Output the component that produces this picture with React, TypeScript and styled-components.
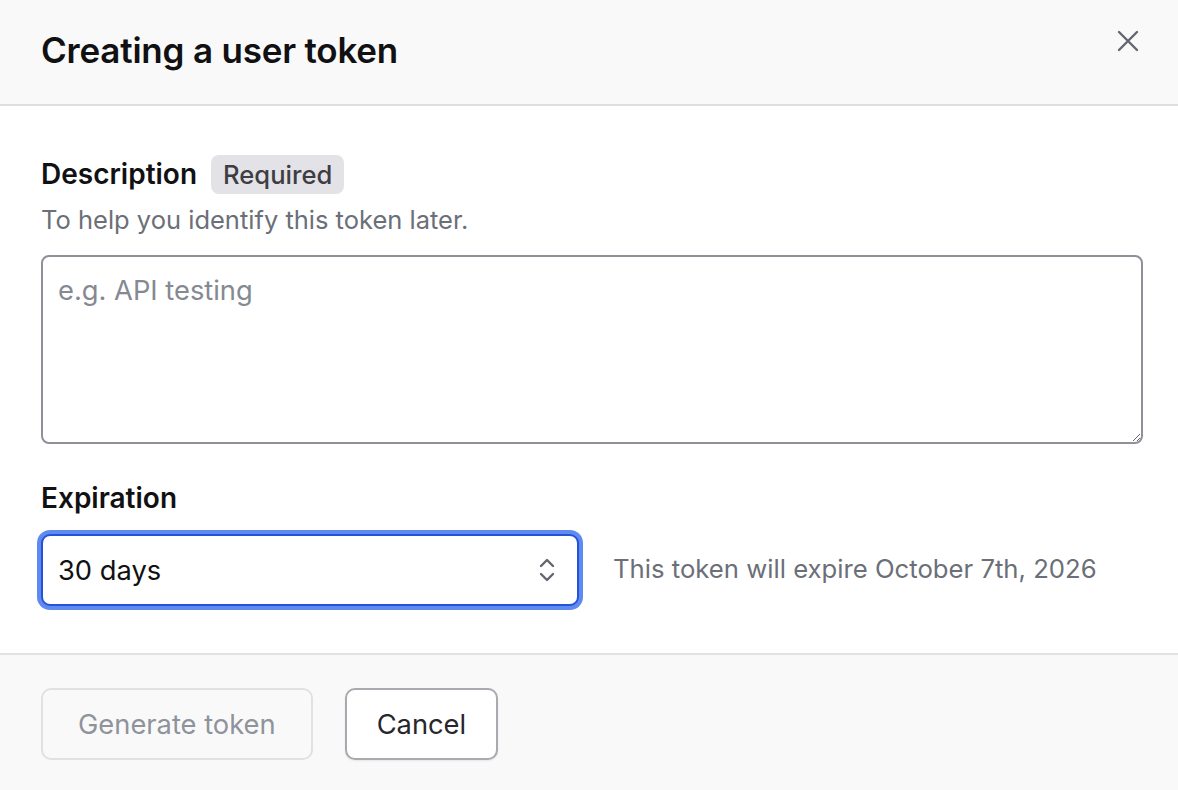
import styled, { createGlobalStyle } from "styled-components";

const GlobalStyle = createGlobalStyle`
  html, body {
    margin: 0;
    padding: 0;
    background: #ffffff;
  }
  body {
    font-family: Inter, "Noto Sans", "Liberation Sans", sans-serif;
    color: #18181b;
    -webkit-font-smoothing: antialiased;
  }
  * {
    box-sizing: border-box;
  }
`;

const Dialog = styled.div`
  width: 1178px;
  height: 790px;
  display: flex;
  flex-direction: column;
  background: #ffffff;
`;

const Header = styled.header`
  height: 106px;
  display: flex;
  align-items: flex-start;
  justify-content: space-between;
  padding: 27px 28px 0 41px;
  background: #f9f9f9;
  border-bottom: 2px solid #dedede;
`;

const Title = styled.h1`
  margin: 0;
  font-size: 35px;
  font-weight: 600;
  line-height: 46px;
  letter-spacing: -0.2px;
  color: #111113;
`;

const CloseButton = styled.button`
  appearance: none;
  border: 0;
  background: transparent;
  padding: 0;
  width: 44px;
  height: 28px;
  display: flex;
  align-items: center;
  justify-content: center;
  color: #63666e;
  cursor: pointer;
`;

const Body = styled.div`
  flex: 1;
  display: flex;
  flex-direction: column;
  padding: 48px 35px 0 41px;
  border-bottom: 2px solid #e2e2e4;
`;

const LabelRow = styled.div`
  display: flex;
  align-items: center;
  gap: 14px;
`;

const Label = styled.label`
  font-size: 28px;
  font-weight: 600;
  line-height: 40px;
  color: #111113;
`;

const Badge = styled.span`
  height: 39px;
  display: inline-flex;
  align-items: center;
  padding: 0 12px;
  border-radius: 8px;
  background: #e3e3e7;
  color: #3d3d44;
  font-size: 25.6px;
  font-weight: 500;
`;

const Hint = styled.p`
  margin: 8px 0 0;
  font-size: 25.5px;
  line-height: 36px;
  color: #6b6f78;
`;

const TextArea = styled.textarea`
  margin-top: 17px;
  width: 100%;
  height: 189px;
  resize: vertical;
  padding: 17px 15px;
  border: 2px solid #8e9199;
  border-radius: 8px;
  font-family: inherit;
  font-size: 27.3px;
  line-height: 34px;
  color: #18181b;
  outline: none;

  &::placeholder {
    color: #858991;
  }
`;

const Section = styled.div`
  margin-top: 34px;
`;

const ExpiryRow = styled.div`
  margin-top: 16px;
  display: flex;
  align-items: center;
  gap: 34px;
`;

const SelectWrap = styled.div`
  position: relative;
  width: 538px;
`;

const Select = styled.select`
  appearance: none;
  width: 100%;
  height: 72px;
  padding: 0 50px 0 15px;
  border: 2px solid #2553d8;
  border-radius: 9px;
  box-shadow: 0 0 0 4px #5f8bf0;
  background: #ffffff;
  font-family: inherit;
  font-size: 27.3px;
  color: #111113;
  outline: none;
`;

const SelectIcon = styled.svg`
  position: absolute;
  right: 24px;
  top: 50%;
  transform: translateY(-50%);
  pointer-events: none;
  color: #63666e;
`;

const ExpiryNote = styled.span`
  font-size: 25.7px;
  color: #6b6f78;
  margin-top: -4px;
`;

const Footer = styled.footer`
  height: 135px;
  display: flex;
  align-items: flex-start;
  gap: 32px;
  padding: 33px 41px 0;
  background: #f9f9f9;
`;

const Button = styled.button<{ $disabled?: boolean }>`
  appearance: none;
  height: 72px;
  padding: 0 ${(p) => (p.$disabled ? "35px" : "30px")};
  border-radius: 10px;
  border: 2px solid ${(p) => (p.$disabled ? "#e1e1e4" : "#a9a9af")};
  background: ${(p) => (p.$disabled ? "transparent" : "#ffffff")};
  color: ${(p) => (p.$disabled ? "#8f939b" : "#26262b")};
  font-family: inherit;
  font-size: 27.3px;
  box-shadow: ${(p) => (p.$disabled ? "none" : "0 1px 2px rgba(0,0,0,0.08)")};
  cursor: ${(p) => (p.$disabled ? "default" : "pointer")};
`;

export default function App() {
  return (
    <>
      <GlobalStyle />
      <Dialog>
        <Header>
          <Title>Creating a user token</Title>
          <CloseButton aria-label="Close">
            <svg width="24" height="24" viewBox="0 0 24 24" fill="none" stroke="currentColor" strokeWidth="2.4" strokeLinecap="round">
              <path d="M3 3L21 21M21 3L3 21" />
            </svg>
          </CloseButton>
        </Header>
        <Body>
          <LabelRow>
            <Label htmlFor="desc">Description</Label>
            <Badge>Required</Badge>
          </LabelRow>
          <Hint>To help you identify this token later.</Hint>
          <TextArea id="desc" placeholder="e.g. API testing" />
          <Section>
            <Label htmlFor="expiry">Expiration</Label>
            <ExpiryRow>
              <SelectWrap>
                <Select id="expiry" defaultValue="30">
                  <option value="7">7 days</option>
                  <option value="30">30 days</option>
                  <option value="60">60 days</option>
                  <option value="90">90 days</option>
                </Select>
                <SelectIcon width="16" height="26" viewBox="0 0 16 26" fill="none" stroke="currentColor" strokeWidth="2.4" strokeLinecap="round" strokeLinejoin="round">
                  <path d="M2 9L8 3L14 9" />
                  <path d="M2 17L8 23L14 17" />
                </SelectIcon>
              </SelectWrap>
              <ExpiryNote>This token will expire October 7th, 2026</ExpiryNote>
            </ExpiryRow>
          </Section>
        </Body>
        <Footer>
          <Button $disabled disabled>
            Generate token
          </Button>
          <Button>Cancel</Button>
        </Footer>
      </Dialog>
    </>
  );
}
